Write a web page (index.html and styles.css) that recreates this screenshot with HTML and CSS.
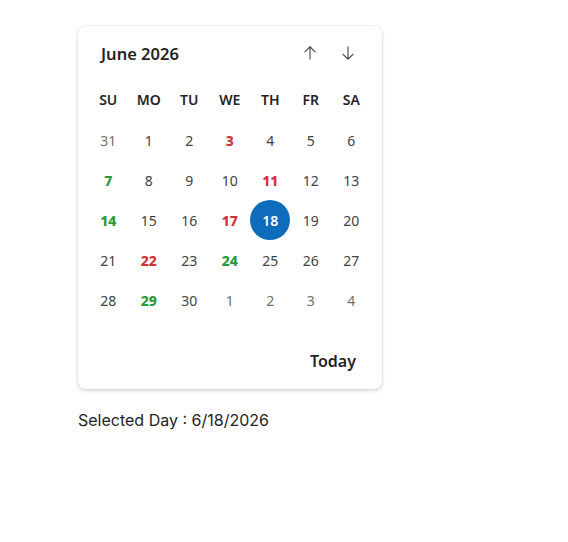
FILE: index.html
```html
<html>
    <head>
        <title>Calendar</title>
        <link rel="stylesheet" href="styles.css">
    </head>
    <body>
        <div class="page">
            <div class="calendar">
                <div class="cal-header">
                    <span class="cal-title">June 2026</span>
                    <div class="cal-nav">
                        <button class="nav-btn" title="Previous month">
                            <svg width="16" height="16" viewBox="0 0 16 16"><path d="M8 14.5V1.8M2.6 7.2L8 1.8l5.4 5.4" fill="none" stroke="#424242" stroke-width="1.1"/></svg>
                        </button>
                        <button class="nav-btn" title="Next month">
                            <svg width="16" height="16" viewBox="0 0 16 16"><path d="M8 1.5v12.7M2.6 8.8L8 14.2l5.4-5.4" fill="none" stroke="#424242" stroke-width="1.1"/></svg>
                        </button>
                    </div>
                </div>
                <div class="weekdays">
                    <span>SU</span><span>MO</span><span>TU</span><span>WE</span><span>TH</span><span>FR</span><span>SA</span>
                </div>
                <div class="days">
                    <span class="day other">31</span><span class="day">1</span><span class="day">2</span><span class="day red">3</span><span class="day">4</span><span class="day">5</span><span class="day">6</span>
                    <span class="day green">7</span><span class="day">8</span><span class="day">9</span><span class="day">10</span><span class="day red">11</span><span class="day">12</span><span class="day">13</span>
                    <span class="day green">14</span><span class="day">15</span><span class="day">16</span><span class="day red">17</span><span class="day selected">18</span><span class="day">19</span><span class="day">20</span>
                    <span class="day">21</span><span class="day red">22</span><span class="day">23</span><span class="day green">24</span><span class="day">25</span><span class="day">26</span><span class="day">27</span>
                    <span class="day">28</span><span class="day green">29</span><span class="day">30</span><span class="day other">1</span><span class="day other">2</span><span class="day other">3</span><span class="day other">4</span>
                </div>
                <div class="cal-footer">
                    <button class="today-btn">Today</button>
                </div>
            </div>
            <p class="selected-text">Selected Day : 6/18/2026</p>
        </div>
    </body>
</html>
```

FILE: styles.css
```css
body {
    margin: 0;
    background: #fff;
    font-family: "Noto Sans", sans-serif;
}
.page {
    padding: 26px 0 0 78px;
}
.calendar {
    width: 304px;
    height: 363px;
    box-sizing: border-box;
    padding: 0 11px 0 10px;
    border-radius: 8px;
    background: #fff;
    box-shadow: 0 0 2px rgba(0, 0, 0, 0.14), 0 2px 4px rgba(0, 0, 0, 0.14);
}
.cal-header {
    display: flex;
    align-items: center;
    justify-content: space-between;
    height: 54px;
}
.cal-title {
    padding-left: 13px;
    font-size: 16.5px;
    font-weight: 600;
    color: #242424;
}
.cal-nav {
    display: flex;
    gap: 10px;
    margin-right: 9px;
}
.nav-btn {
    width: 28px;
    height: 28px;
    padding: 0;
    border: none;
    background: none;
    display: flex;
    align-items: center;
    justify-content: center;
}
.weekdays,
.days {
    display: grid;
    grid-template-columns: repeat(7, 40.5px);
}
.weekdays span {
    height: 40px;
    line-height: 40px;
    text-align: center;
    font-size: 14px;
    font-weight: 600;
    color: #242424;
}
.day {
    height: 40px;
    display: flex;
    align-items: center;
    justify-content: center;
    font-size: 14px;
    color: #424242;
}
.day.other {
    color: #707070;
}
.day.red {
    color: #d13438;
    font-weight: 800;
}
.day.green {
    color: #2b9a3e;
    font-weight: 800;
}
.day.selected {
    width: 40px;
    margin: 0 auto;
    border-radius: 50%;
    background: #0f6cbd;
    color: #fff;
    font-weight: 600;
}
.cal-footer {
    display: flex;
    justify-content: flex-end;
    padding-top: 28px;
}
.today-btn {
    height: 26px;
    margin-right: 15px;
    padding: 0;
    border: none;
    background: none;
    font-family: "Noto Sans", sans-serif;
    font-size: 16px;
    font-weight: 600;
    color: #242424;
}
.selected-text {
    margin: 21px 0 0;
    font-family: Inter, sans-serif;
    font-size: 16px;
    color: #242424;
}
```
